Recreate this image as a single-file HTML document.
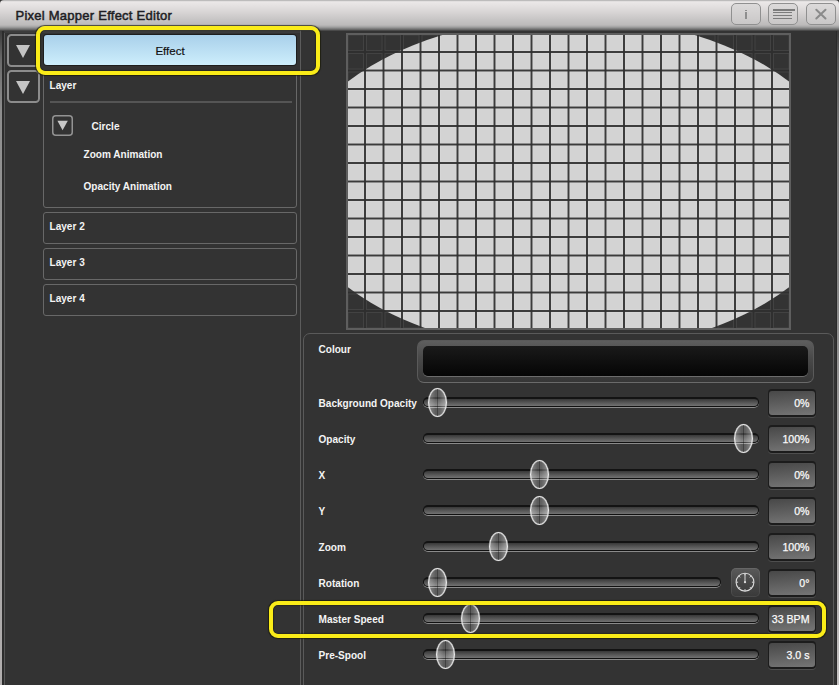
<!DOCTYPE html>
<html><head><meta charset="utf-8">
<style>
*{box-sizing:border-box;margin:0;padding:0}
html,body{width:839px;height:685px;overflow:hidden;background:#333}
body{position:relative;font-family:"Liberation Sans",sans-serif;color:#f2f2f2}
.a{position:absolute}
#title{left:0px;top:0px;width:839px;height:31px;border-radius:4px 4px 0 0;
 background:linear-gradient(#a2a2a2 0px,#d8d6d6 1px,#ebe8e8 2px,#e2dfdf 7px,#d6d3d3 13px,#c6c4c4 20px,#bcbaba 25px,#a2a2a2 27px,#6a6a6a 29.5px,#3a3a3a 31px)}
#ttext{left:15.5px;top:8px;font-size:13px;letter-spacing:0.25px;font-weight:normal;-webkit-text-stroke:0.5px #1e1e24;color:#1e1e24;white-space:nowrap}
.tb{top:3px;width:30px;height:22px;border:1.3px solid #909090;border-radius:5px;
 background:linear-gradient(#dcdada,#c9c7c7)}
.lbl{position:absolute;font-size:11.3px;font-weight:bold;white-space:nowrap;color:#f4f4f4;transform:scaleX(0.89) translateX(0.6px);transform-origin:0 0}
.box{position:absolute;border:1px solid #686868;border-radius:3px}
.arr{position:absolute;left:7px;width:33px;height:32.4px;border:2px solid #8c8c8c;border-radius:4.5px}
.tri{position:absolute;width:0;height:0;border-left:7px solid transparent;border-right:7px solid transparent;border-top:13px solid #bdbdbd}
.track{position:absolute;left:423px;height:10px;border-radius:5px;border:1px solid #111;border-top:2px solid #131313;
 background:linear-gradient(#383838 0%,#474747 25%,#727272 100%);
 box-shadow:0 1px 0 #8a8a8a}
.thumb{position:absolute;width:19px;height:29px;border-radius:50%;border:1px solid rgba(240,240,240,0.95);box-shadow:inset 0 0 0.6px 0.5px rgba(240,240,240,0.45),0 0 0.6px 0.3px rgba(240,240,240,0.3);
 background:linear-gradient(90deg,rgba(255,255,255,0.42),rgba(255,255,255,0.2) 40%,rgba(255,255,255,0.22) 60%,rgba(255,255,255,0.45))}
.thumb:before{content:"";position:absolute;left:8.2px;top:0;width:1px;height:100%;background:rgba(0,0,0,0.3)}
.val{position:absolute;left:767.5px;width:48.5px;height:28px;border-radius:4px;background:#1c1c1c;
 box-shadow:0 1px 0.5px #4e4e4e}
.val div{position:absolute;left:1.5px;top:2px;right:1.5px;bottom:2px;border-radius:3px;
 background:linear-gradient(175deg,#484848 0%,#5a5a5a 40%,#767676 100%);font-size:10.6px;color:#fafafa;text-align:right;padding-right:5px;line-height:24.5px;-webkit-text-stroke:0.25px #fafafa}
</style></head><body>
<!-- window left border -->
<div class="a" style="left:0;top:30px;width:2.4px;height:655px;background:linear-gradient(#3a3a3a 0px,#6a6a6a 30px,#8e8e8e 80px,#9a9a9a 270px,#b2afaf 655px)"></div><div class="a" style="left:2.4px;top:30px;width:1.4px;height:655px;background:#2c2c2c"></div>
<div class="a" style="left:3.8px;top:30px;width:1.2px;height:655px;background:#585858"></div><div class="a" style="left:4px;top:31px;width:296px;height:1.5px;background:#3c3c3c"></div>
<div class="a" style="left:835.8px;top:30px;width:1px;height:655px;background:#2a2a2a"></div><div class="a" style="left:836.8px;top:30px;width:2.2px;height:655px;background:linear-gradient(#3a3a3a 0px,#5a5a5a 30px,#7a7a7a 100px,#8a8a8a 270px,#c5c2c2 655px)"></div>

<div id="title" class="a"></div>

<div id="ttext" class="a">Pixel Mapper Effect Editor</div>
<div class="a tb" style="left:731px"><div class="a" style="left:13.2px;top:6.3px;width:2.2px;height:1.2px;background:#8e8e8e"></div><div class="a" style="left:13.2px;top:8.3px;width:2.2px;height:6.7px;background:#8e8e8e"></div></div>
<div class="a tb" style="left:768px"><div class="a" style="left:3.5px;top:5.2px;width:22px;height:1.7px;background:#7c7c7c"></div><div class="a" style="left:3.5px;top:8.2px;width:19px;height:1.3px;background:#7c7c7c"></div><div class="a" style="left:3.5px;top:11px;width:19px;height:1.3px;background:#7c7c7c"></div><div class="a" style="left:3.5px;top:13.6px;width:19px;height:1.6px;background:#7c7c7c"></div></div>
<div class="a tb" style="left:806px"><svg class="a" style="left:0;top:0" width="30" height="22"><path d="M9.3 5.7 L18.5 14.5 M18.5 5.7 L9.3 14.5" stroke="#8a8a8a" stroke-width="2" stroke-linecap="round"/></svg></div>

<!-- separator -->
<div class="a" style="left:300px;top:30px;width:1px;height:655px;background:#5c5c5c"></div>

<!-- left arrows -->
<div class="arr" style="top:34.2px"><div class="tri" style="left:7.4px;top:8.9px;border-left-width:7.2px;border-right-width:7.2px;border-top-width:13.5px;border-top-color:#c4c4c4"></div></div>
<div class="arr" style="top:70.2px"><div class="tri" style="left:7.4px;top:8.9px;border-left-width:7.2px;border-right-width:7.2px;border-top-width:13.5px;border-top-color:#c4c4c4"></div></div>

<!-- layer group -->
<div class="box" style="left:43px;top:72px;width:254px;height:136px"></div>
<div class="lbl" style="left:49px;top:79px">Layer</div>
<div class="a" style="left:50px;top:101px;width:242px;height:2px;background:#555"></div>
<svg class="a" style="left:51px;top:114px" width="23" height="23"><rect x="1.75" y="1.75" width="19.5" height="19.5" rx="3" fill="none" stroke="#939393" stroke-width="1.5"/><path d="M6.4 6.7 L16.8 6.7 L11.6 16.3 Z" fill="#c8c8c8"/></svg>
<div class="lbl" style="left:91px;top:120px">Circle</div>
<div class="lbl" style="left:83px;top:148px">Zoom Animation</div>
<div class="lbl" style="left:83px;top:180px">Opacity Animation</div>

<div class="box" style="left:43px;top:212px;width:254px;height:32px"></div>
<div class="lbl" style="left:49px;top:220px">Layer 2</div>
<div class="box" style="left:43px;top:248px;width:254px;height:32px"></div>
<div class="lbl" style="left:49px;top:256px">Layer 3</div>
<div class="box" style="left:43px;top:284px;width:254px;height:32px"></div>
<div class="lbl" style="left:49px;top:292px">Layer 4</div>

<!-- effect button -->
<div class="a" style="left:43.5px;top:35px;width:252.7px;height:30px;border-radius:3px;background:linear-gradient(#a9d0ea,#cdeefc);box-shadow:0 0 0 1px #1e1e1e"></div>
<div class="a" style="left:43px;top:35.7px;width:254px;height:30px;text-align:center;line-height:30px;font-size:11.5px;color:#111;-webkit-text-stroke:0.2px #111">Effect</div>
<div class="a" style="left:36px;top:26px;width:284px;height:49px;border:4.3px solid #faec18;border-radius:9px;box-shadow:0 0 0.8px 0.6px rgba(25,25,5,0.7),inset 0 0 0.8px 0.6px rgba(25,25,5,0.7)"></div>

<!-- grid -->
<svg class="a" style="left:0;top:0" width="839" height="685">
<defs>
<clipPath id="gc"><rect x="348" y="35" width="441" height="293"/></clipPath>
<pattern id="gp" patternUnits="userSpaceOnUse" x="346.5" y="33.5" width="18.5" height="18.5">
<rect x="1.4" y="1.4" width="15.7" height="15.7" fill="none" stroke="rgba(255,255,255,0.08)" stroke-width="1"/>
<rect x="17.6" y="0" width="0.9" height="18.5" fill="#2e2e2e"/>
<rect x="0" y="0" width="0.9" height="18.5" fill="#2e2e2e"/>
<rect x="0" y="17.6" width="18.5" height="0.9" fill="#2e2e2e"/>
<rect x="0" y="0" width="18.5" height="0.9" fill="#2e2e2e"/>
</pattern>
</defs>
<rect x="346" y="33" width="445" height="297" fill="#333"/>
<g clip-path="url(#gc)"><ellipse cx="568.5" cy="184.35" rx="279.4" ry="167.4" fill="#d3d3d3"/>
<rect x="346" y="32" width="446" height="298" fill="url(#gp)"/></g>
<rect x="347" y="34" width="443" height="295" fill="none" stroke="#5e5e5e" stroke-width="2"/>
</svg>

<!-- bottom panel -->
<div class="a" style="left:303px;top:333px;width:531px;height:400px;border:1px solid #5a5a5a;border-radius:7px"></div>
<div class="lbl" style="left:318px;top:343px">Colour</div>
<div class="a" style="left:417px;top:340px;width:397px;height:43px;border-radius:7px;background:linear-gradient(#5e5e5e,#4a4a4a 40%,#363636);border:1px solid #5a5a5a;border-bottom-color:#6a6a6a"></div>
<div class="a" style="left:423px;top:346px;width:385px;height:29.5px;border-radius:5px;background:linear-gradient(#1a1a1a,#050505);box-shadow:0 1px 0 rgba(200,200,200,0.35)"></div>

<div class="lbl" style="left:318px;top:397px">Background Opacity</div>
<div class="track" style="top:397px;width:336px"></div>
<div class="thumb" style="left:428px;top:388px"></div>
<div class="val" style="top:389px"><div>0%</div></div>

<div class="lbl" style="left:318px;top:433px">Opacity</div>
<div class="track" style="top:433px;width:336px"></div>
<div class="thumb" style="left:734px;top:424px"></div>
<div class="val" style="top:425px"><div>100%</div></div>

<div class="lbl" style="left:318px;top:469px">X</div>
<div class="track" style="top:469px;width:336px"></div>
<div class="thumb" style="left:530px;top:460px"></div>
<div class="val" style="top:461px"><div>0%</div></div>

<div class="lbl" style="left:318px;top:505px">Y</div>
<div class="track" style="top:505px;width:336px"></div>
<div class="thumb" style="left:530px;top:496px"></div>
<div class="val" style="top:497px"><div>0%</div></div>

<div class="lbl" style="left:318px;top:541px">Zoom</div>
<div class="track" style="top:541px;width:336px"></div>
<div class="thumb" style="left:489px;top:532px"></div>
<div class="val" style="top:533px"><div>100%</div></div>

<div class="lbl" style="left:318px;top:577px">Rotation</div>
<div class="track" style="top:577px;width:298px"></div>
<div class="thumb" style="left:428px;top:568px"></div>
<div class="a" style="left:731px;top:568px;width:28.5px;height:28.5px;border-radius:5px;background:linear-gradient(#5a5a5a,#484848 50%,#393939);box-shadow:inset 0 0 0 1px rgba(255,255,255,0.08)"><svg class="a" style="left:0;top:0" width="29" height="29"><circle cx="14" cy="14.2" r="8.9" fill="none" stroke="#dadada" stroke-width="1.1"/><path d="M14.00 5.30L14.00 7.30 M20.29 7.91L18.88 9.32 M22.90 14.20L20.90 14.20 M20.29 20.49L18.88 19.08 M14.00 23.10L14.00 21.10 M7.71 20.49L9.12 19.08 M5.10 14.20L7.10 14.20 M7.71 7.91L9.12 9.32 M14 14.2 L14 5.6" stroke="#dadada" stroke-width="1"/><circle cx="14" cy="14.2" r="1.1" fill="#dedede"/></svg></div>
<div class="val" style="top:569px"><div>0°</div></div>

<div class="lbl" style="left:318px;top:613px">Master Speed</div>
<div class="track" style="top:613px;width:336px"></div>
<div class="thumb" style="left:461px;top:604px"></div>
<div class="val" style="top:605px"><div>33 BPM</div></div>
<div class="a" style="left:269px;top:601px;width:557px;height:37px;border:4.3px solid #faec18;border-radius:9px;box-shadow:0 0 0.8px 0.6px rgba(25,25,5,0.7),inset 0 0 0.8px 0.6px rgba(25,25,5,0.7)"></div>

<div class="lbl" style="left:318px;top:649px">Pre-Spool</div>
<div class="track" style="top:649px;width:336px"></div>
<div class="thumb" style="left:436px;top:640px"></div>
<div class="val" style="top:641px"><div>3.0 s</div></div>
</body></html>
